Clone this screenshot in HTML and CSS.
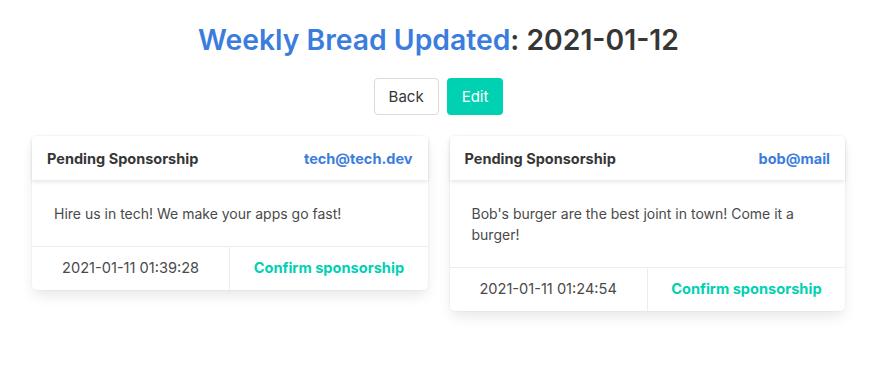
FILE: index.html
```html
<!DOCTYPE html>
<html lang="en">
<head>
<meta charset="UTF-8">
<title>Weekly Bread</title>
<link rel="stylesheet" href="styles.css">
</head>
<body>

<section class="section">
  <h1 class="title"><span class="bread">Weekly Bread Updated</span>: 2021-01-12</h1>

  <div class="buttons">
    <button class="button">Back</button>
    <button class="button is-primary">Edit</button>
  </div>

  <div class="columns">
    <div class="card">
      <header class="card-header">
        <p class="card-header-title">Pending Sponsorship</p>
        <a class="card-header-link">tech@tech.dev</a>
      </header>
      <div class="card-content">Hire us in tech! We make your apps go fast!</div>
      <footer class="card-footer">
        <span class="card-footer-item">2021-01-11 01:39:28</span>
        <a class="card-footer-item confirm">Confirm sponsorship</a>
      </footer>
    </div>

    <div class="card">
      <header class="card-header">
        <p class="card-header-title">Pending Sponsorship</p>
        <a class="card-header-link">bob@mail</a>
      </header>
      <div class="card-content">Bob's burger are the best joint in town! Come it a burger!</div>
      <footer class="card-footer">
        <span class="card-footer-item">2021-01-11 01:24:54</span>
        <a class="card-footer-item confirm">Confirm sponsorship</a>
      </footer>
    </div>
  </div>
</section>

</body>
</html>
```

FILE: styles.css
```css
html { font-size:15px; }
body { margin:0; background:#fff; color:#4a4a4a; font-family: Inter, "Noto Sans", sans-serif; font-size:14px; line-height:1.5; }
.section { padding:20px 35px 40px 32px; }

.title { margin:0; text-align:center; font-size:28.3px; font-weight:600; line-height:40px; color:#363636; }
.bread { color:#3b7ddd; }

.buttons { display:flex; justify-content:center; gap:8px; margin-top:18px; }
.button { font-family:inherit; font-size:15px; height:37px; padding:0 14px; border:1px solid #dbdbdb; border-radius:4px; background:#fff; color:#363636; cursor:pointer; }
.button.is-primary { background:#00d1b2; border-color:transparent; color:#fff; }

.columns { display:flex; align-items:flex-start; gap:22px; margin-top:21px; }
.card { flex:1; background:#fff; border-radius:5px; box-shadow:0 7px 14px -2px rgba(10,10,10,.1), 0 0 0 1px rgba(10,10,10,.02); color:#4a4a4a; }

.card-header { display:flex; justify-content:space-between; align-items:center; padding:11.5px 15px; font-size:14.5px; line-height:21px; box-shadow:0 2px 4px rgba(10,10,10,.1); }
.card-header-title { margin:0; font-weight:700; color:#363636; }
.card-header-link { font-weight:700; color:#3b7ddd; }

.card-content { padding:22.5px 22px; }

.card-footer { display:flex; border-top:1px solid #ededed; }
.card-footer-item { flex:1; text-align:center; padding:11px 10px; font-size:14.6px; line-height:21px; }
.card-footer-item + .card-footer-item { border-left:1px solid #ededed; }
.confirm { color:#00d1b2; font-weight:700; }
```
